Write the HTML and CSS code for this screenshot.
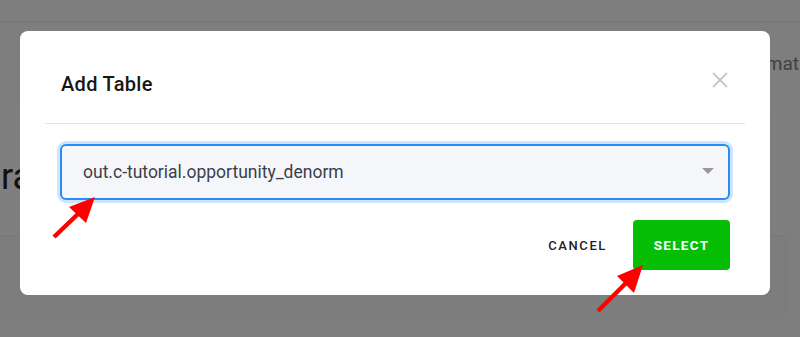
FILE: index.html
```html
<!DOCTYPE html>
<html>
<head>
<meta charset="utf-8">
<link rel="stylesheet" href="styles.css">
</head>
<body>
<div class="page">
  <header class="topbar"></header>
  <nav class="tabs"><span class="tab">mat</span></nav>
  <section class="card">
    <div class="card-head"><h1 class="heading">raph</h1></div>
    <div class="card-body"></div>
  </section>
</div>
<div class="overlay"></div>
<div class="modal-wrap">
  <div class="modal">
    <div class="modal-head">
      <h2 class="modal-title">Add Table</h2>
      <svg class="close" width="16" height="16" viewBox="0 0 16 16"><path d="M1 1L15 15M15 1L1 15" stroke="#c9c9c9" stroke-width="2"/></svg>
    </div>
    <div class="modal-body">
      <div class="select">
        <span class="select-value">out.c-tutorial.opportunity_denorm</span>
        <span class="caret"></span>
      </div>
    </div>
    <div class="modal-foot">
      <button class="btn btn-link">CANCEL</button>
      <button class="btn btn-success">SELECT</button>
    </div>
  </div>
</div>
<svg class="arrows" width="800" height="337" viewBox="0 0 800 337">
  <line x1="54" y1="237" x2="78" y2="214" stroke="#ff0000" stroke-width="4.5"/>
  <polygon points="95,197 69,207 86,223" fill="#ff0000"/>
  <line x1="598" y1="311" x2="626" y2="283" stroke="#ff0000" stroke-width="4.5"/>
  <polygon points="643,265 617,276 634,293" fill="#ff0000"/>
</svg>
</body>
</html>
```
FILE: styles.css
```css
* { box-sizing: border-box; }
html, body { margin: 0; padding: 0; }
body {
  width: 800px;
  height: 337px;
  overflow: hidden;
  font-family: Roboto, "Liberation Sans", sans-serif;
  background: #fcfdfd;
  position: relative;
}
.page { display: flex; flex-direction: column; }
.topbar {
  height: 22px;
  background: #ffffff;
  border-bottom: 1px solid #e8e8e8;
}
.tabs {
  height: 85px;
  display: flex;
  justify-content: flex-end;
  padding-top: 30px;
  padding-right: 1px;
}
.tab {
  font-size: 19px;
  color: #7c7f92;
  line-height: 24px;
}
.card {
  width: 785px;
  height: 211px;
  background: #fafbfb;
  border-radius: 0 0 8px 0;
  box-shadow: 0 1px 3px rgba(0,0,0,0.06);
}
.card-head {
  height: 129px;
  background: #ffffff;
  border-bottom: 1px solid #f0f0f0;
  padding-top: 50px;
}
.heading {
  margin: 0 0 0 1px;
  font-size: 36px;
  font-weight: 400;
  line-height: 40px;
  color: #222;
}
.overlay {
  position: absolute;
  inset: 0;
  background: rgba(0,0,0,0.5);
}
.modal-wrap {
  position: absolute;
  inset: 0;
  padding: 31px 0 0 20px;
}
.modal {
  width: 750px;
  height: 264px;
  background: #fff;
  border-radius: 8px;
  padding: 0 25px;
  display: flex;
  flex-direction: column;
}
.modal-head {
  height: 93px;
  border-bottom: 1px solid #e5e5e5;
  display: flex;
  align-items: center;
  justify-content: space-between;
  padding: 14px 17px 0 16px;
}
.modal-title {
  margin: 0;
  font-size: 20px;
  font-weight: 500;
  color: #161616;
  letter-spacing: 0.3px;
}
.close { display: block; margin-top: -8px; }
.modal-body {
  padding: 20px 15px 0 15px;
}
.select {
  height: 56px;
  border: 2px solid #2a8df6;
  border-radius: 6px;
  background: #f5f6f9;
  box-shadow: 0 0 0 3px #cfe5ff;
  display: flex;
  align-items: center;
  justify-content: space-between;
  padding: 0 14px 0 21px;
}
.select-value {
  font-size: 17.5px;
  color: #3b3f4b;
  margin-top: -1px;
}
.caret {
  width: 0;
  height: 0;
  border-left: 6px solid transparent;
  border-right: 6px solid transparent;
  border-top: 6px solid #9a9a9a;
  margin-top: -2px;
}
.modal-foot {
  display: flex;
  justify-content: flex-end;
  align-items: center;
  gap: 26px;
  padding: 20px 15px 0 0;
}
.btn {
  font-family: Roboto, "Liberation Sans", sans-serif;
  font-size: 13px;
  letter-spacing: 1.6px;
  border: none;
  cursor: pointer;
}
.btn-link {
  background: none;
  color: #222;
  font-weight: 500;
  padding: 0;
}
.btn-success {
  width: 97px;
  height: 50px;
  background: #07be07;
  color: #fff;
  font-weight: 700;
  font-size: 13.5px;
  border-radius: 4px;
  letter-spacing: 1.3px;
  padding: 0;
}
.arrows {
  position: absolute;
  left: 0;
  top: 0;
}
```
